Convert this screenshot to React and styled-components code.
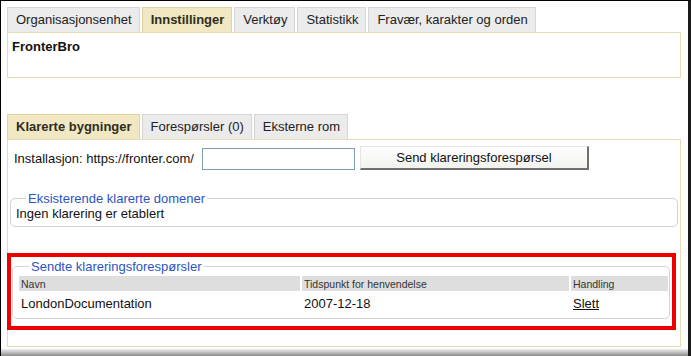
import React from "react";
import styled, { createGlobalStyle } from "styled-components";

const GlobalStyle = createGlobalStyle`
  body {
    margin: 0;
    font-family: "Liberation Sans", Arial, sans-serif;
    font-size: 13px;
    color: #111;
    background: #fff;
  }
`;

const Frame = styled.div`
  width: 691px;
  height: 356px;
  box-sizing: border-box;
  display: flex;
  flex-direction: column;
  border-left: 1px solid #000;
  border-top: 1px solid #000;
  border-right: 3px solid #1a1a1a;
  background: #fff;
`;

const Content = styled.div`
  flex: 1;
  padding: 6px 7px 0 6px;
`;

const BottomEdge = styled.div`
  height: 7px;
  background: linear-gradient(#ececec, #c4c4c4 45%, #8a8a8a);
`;

const TabBar = styled.div`
  display: flex;
  gap: 2px;
  margin-top: ${(p) => p.offset || 0}px;
`;

const Tab = styled.div`
  height: 24px;
  line-height: 24px;
  padding: 0 7px 0 8px;
  border: 1px solid ${(p) => (p.active ? "#e0d39f" : "#d6d6d6")};
  border-bottom: none;
  background: ${(p) => (p.active ? "#f1e7c2" : "#ebebeb")};
  font-weight: ${(p) => (p.active ? "bold" : "normal")};
  color: ${(p) => (p.active ? "#2e2e1e" : "#222")};
  white-space: nowrap;
`;

const Panel = styled.div`
  border: 1px solid #e6dbb2;
  background: #fff;
  box-sizing: border-box;
  height: ${(p) => p.h}px;
  padding: ${(p) => p.pad};
`;

const Title = styled.div`
  font-weight: bold;
  line-height: 15px;
`;

const FormRow = styled.div`
  display: flex;
  align-items: center;
  padding-left: 4px;
  height: 24px;
`;

const Label = styled.span`
  margin-right: 8px;
`;

const TextInput = styled.input`
  width: 153px;
  height: 22px;
  box-sizing: border-box;
  margin: 2px 5px 0 0;
  border: 1px solid #7f9db9;
  font-family: inherit;
  font-size: 13px;
`;

const Button = styled.button`
  width: 229px;
  height: 24px;
  font-family: inherit;
  font-size: 13px;
  color: #111;
  background: linear-gradient(#fefefe, #f2f2ee);
  border: 1px solid;
  border-color: #e4e4e4 #6f6f6f #6f6f6f #e4e4e4;
  border-width: 1px 2px 2px 1px;
  padding: 0;
`;

const Fieldset = styled.fieldset`
  margin: ${(p) => p.m};
  padding: ${(p) => p.pad};
  border: 1px solid #d3d3d3;
  border-radius: 5px;
  min-width: 0;
`;

const Legend = styled.legend`
  color: #2b54c2;
  padding: 0 2px;
  margin-left: 10px;
  line-height: 15px;
`;

const Line = styled.div`
  line-height: 15px;
`;

const Highlight = styled.div`
  border: 4px solid #ee0000;
  margin: 26px 2px 0 -3px;
  height: 77px;
  box-sizing: border-box;
  padding: 2px 2px 0 1px;
`;

const Table = styled.table`
  border-collapse: separate;
  border-spacing: 2px 2px;
  margin: 0 -2px;
  width: calc(100% + 3px);
`;

const HeadCell = styled.th`
  background: #dedede;
  color: #333;
  font-weight: normal;
  font-size: 10.5px;
  text-align: left;
  padding: 0 2px;
  height: 15px;
  width: ${(p) => (p.w ? `${p.w}px` : "auto")};
`;

const Cell = styled.td`
  padding: 3px 2px 2px;
  line-height: 15px;
`;

const Link = styled.a`
  color: #111;
  text-decoration: underline;
`;

export default function App() {
  return (
    <>
      <GlobalStyle />
      <Frame>
        <Content>
          <TabBar>
            <Tab>Organisasjonsenhet</Tab>
            <Tab active>Innstillinger</Tab>
            <Tab>Verktøy</Tab>
            <Tab>Statistikk</Tab>
            <Tab>Fravær, karakter og orden</Tab>
          </TabBar>
          <Panel h={46} pad="6px 4px">
            <Title>FronterBro</Title>
          </Panel>

          <TabBar offset={36}>
            <Tab active>Klarerte bygninger</Tab>
            <Tab>Forespørsler (0)</Tab>
            <Tab>Eksterne rom</Tab>
          </TabBar>
          <Panel h={208} pad="6px 2px 0 2px">
            <FormRow>
              <Label>Installasjon: https://fronter.com/</Label>
              <TextInput type="text" />
              <Button>Send klareringsforespørsel</Button>
            </FormRow>

            <Fieldset m="21px 0 0 0" pad="0 5px 5px">
              <Legend>Eksisterende klarerte domener</Legend>
              <Line>Ingen klarering er etablert</Line>
            </Fieldset>

            <Highlight>
              <Fieldset m="0" pad="0 0 3px 6px">
                <Legend>Sendte klareringsforespørsler</Legend>
                <Table>
                  <thead>
                    <tr>
                      <HeadCell w={277}>Navn</HeadCell>
                      <HeadCell w={263}>Tidspunkt for henvendelse</HeadCell>
                      <HeadCell>Handling</HeadCell>
                    </tr>
                  </thead>
                  <tbody>
                    <tr>
                      <Cell>LondonDocumentation</Cell>
                      <Cell>2007-12-18</Cell>
                      <Cell>
                        <Link href="#">Slett</Link>
                      </Cell>
                    </tr>
                  </tbody>
                </Table>
              </Fieldset>
            </Highlight>
          </Panel>
        </Content>
        <BottomEdge />
      </Frame>
    </>
  );
}
